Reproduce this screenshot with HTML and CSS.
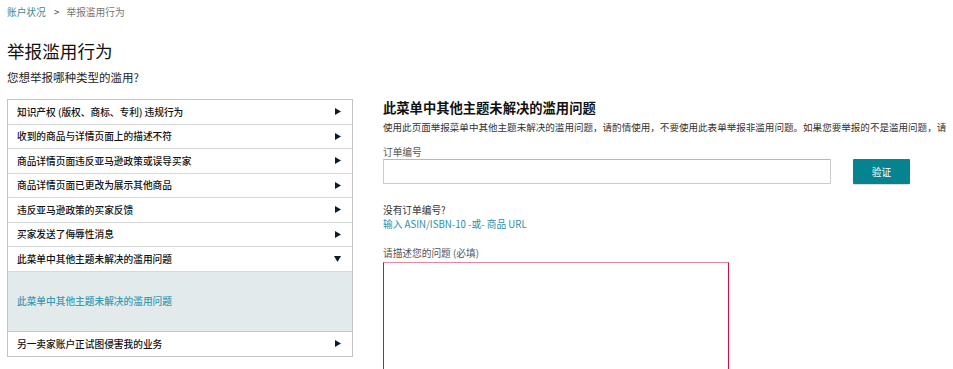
FILE: index.html
```html
<!DOCTYPE html>
<html lang="zh-CN">
<head>
  <meta charset="UTF-8">
  <meta name="viewport" content="width=device-width, initial-scale=1.0">
  <title>举报滥用行为</title>
  <link rel="stylesheet" href="styles.css">
</head>
<body>
  <div class="page">
    <nav class="breadcrumb">
      <a href="#">账户状况</a>
      <span class="sep">&gt;</span>
      <span class="current">举报滥用行为</span>
    </nav>

    <h1>举报滥用行为</h1>
    <p class="subtitle">您想举报哪种类型的滥用?</p>

    <div class="content">
      <div class="menu">
        <div class="menu-row">
          <span>知识产权 (版权、商标、专利) 违规行为</span>
          <svg class="arrow" width="6" height="7" viewBox="0 0 6 7"><polygon points="0,0 6,3.5 0,7" /></svg>
        </div>
        <div class="menu-row">
          <span>收到的商品与详情页面上的描述不符</span>
          <svg class="arrow" width="6" height="7" viewBox="0 0 6 7"><polygon points="0,0 6,3.5 0,7" /></svg>
        </div>
        <div class="menu-row">
          <span>商品详情页面违反亚马逊政策或误导买家</span>
          <svg class="arrow" width="6" height="7" viewBox="0 0 6 7"><polygon points="0,0 6,3.5 0,7" /></svg>
        </div>
        <div class="menu-row">
          <span>商品详情页面已更改为展示其他商品</span>
          <svg class="arrow" width="6" height="7" viewBox="0 0 6 7"><polygon points="0,0 6,3.5 0,7" /></svg>
        </div>
        <div class="menu-row">
          <span>违反亚马逊政策的买家反馈</span>
          <svg class="arrow" width="6" height="7" viewBox="0 0 6 7"><polygon points="0,0 6,3.5 0,7" /></svg>
        </div>
        <div class="menu-row">
          <span>买家发送了侮辱性消息</span>
          <svg class="arrow" width="6" height="7" viewBox="0 0 6 7"><polygon points="0,0 6,3.5 0,7" /></svg>
        </div>
        <div class="menu-row open">
          <span>此菜单中其他主题未解决的滥用问题</span>
          <svg class="arrow" width="7" height="6" viewBox="0 0 7 6"><polygon points="0,0 7,0 3.5,6" /></svg>
        </div>
        <div class="menu-panel">
          <a href="#">此菜单中其他主题未解决的滥用问题</a>
        </div>
        <div class="menu-row">
          <span>另一卖家账户正试图侵害我的业务</span>
          <svg class="arrow" width="6" height="7" viewBox="0 0 6 7"><polygon points="0,0 6,3.5 0,7" /></svg>
        </div>
      </div>

      <div class="form-area">
        <h2>此菜单中其他主题未解决的滥用问题</h2>
        <p class="desc">使用此页面举报菜单中其他主题未解决的滥用问题，请酌情使用，不要使用此表单举报非滥用问题。如果您要举报的不是滥用问题，请</p>

        <label class="field-label" for="orderId">订单编号</label>
        <div class="order-row">
          <input type="text" id="orderId" class="order-input">
          <button type="button" class="btn">验证</button>
        </div>

        <p class="no-order">没有订单编号?</p>
        <a href="#" class="alt-link">输入 ASIN/ISBN-10 -或- 商品 URL</a>

        <label class="field-label problem-label" for="problem">请描述您的问题 (必填)</label>
        <textarea id="problem" class="problem"></textarea>
      </div>
    </div>
  </div>
</body>
</html>
```

FILE: styles.css
```css
html, body {
  overflow: hidden;
}
body {
  font-family: "Noto Sans CJK SC", "Noto Sans", sans-serif;
  margin: 0;
  padding: 0;
  background-color: #fff;
  color: #111;
}
.page {
  padding: 0 7px;
}
.breadcrumb {
  padding-top: 5px;
  font-size: 9.7px;
  line-height: 14px;
  height: 14px;
  white-space: nowrap;
}
.breadcrumb a {
  color: #3b8796;
  text-decoration: none;
}
.breadcrumb .sep {
  color: #555;
  margin: 0 5px 0 6px;
}
.breadcrumb .current {
  color: #767676;
}
h1 {
  font-size: 17.6px;
  font-weight: normal;
  line-height: 24px;
  margin: 20px 0 0;
  color: #111;
}
.subtitle {
  font-size: 11.5px;
  line-height: 16px;
  margin: 6px 0 0;
  color: #222;
}
.content {
  display: flex;
  align-items: flex-start;
  margin-top: 14px;
}
.menu {
  width: 344px;
  flex: none;
  border: 1px solid #bfc5c5;
}
.menu-row {
  display: flex;
  justify-content: space-between;
  align-items: center;
  height: 23.5px;
  padding: 0 11px 0 9px;
  border-bottom: 1px solid #d5d9d9;
  font-size: 9.7px;
  font-weight: 500;
  color: #111;
  white-space: nowrap;
}
.menu-row:last-child {
  border-bottom: none;
}
.arrow {
  fill: #0f1c2b;
}
.menu-panel {
  display: flex;
  align-items: center;
  height: 59.5px;
  padding: 0 9px;
  background-color: #e3eaeb;
  border-bottom: 1px solid #c3cbcc;
}
.menu-panel a {
  color: #3a9ab4;
  font-size: 9.7px;
  font-weight: 500;
  text-decoration: none;
}
.form-area {
  margin-left: 30px;
  white-space: nowrap;
}
.form-area h2 {
  font-size: 13.3px;
  line-height: 18px;
  font-weight: bold;
  margin: 0 0 3px;
  color: #111;
}
.desc {
  font-size: 9.55px;
  line-height: 14px;
  margin: 0;
  color: #333;
}
.field-label {
  display: block;
  font-size: 9.7px;
  line-height: 14px;
  margin-top: 11px;
  color: #555;
}
.order-row {
  display: flex;
  align-items: center;
}
.order-input {
  width: 448px;
  height: 25px;
  box-sizing: border-box;
  border: 1px solid #c8cccc;
  border-top-color: #b4b8b8;
  border-radius: 1px;
  padding: 0 6px;
}
.btn {
  margin-left: 22px;
  width: 57px;
  height: 25px;
  background-color: #05838f;
  color: #fff;
  border: none;
  border-radius: 1px;
  box-shadow: 0 1px 1px rgba(0, 0, 0, 0.15);
  font-family: inherit;
  font-size: 9.7px;
  cursor: pointer;
}
.no-order {
  font-size: 9.7px;
  line-height: 14px;
  margin: 19px 0 0;
  color: #333;
}
.alt-link {
  display: block;
  font-size: 9.7px;
  line-height: 14px;
  color: #2b8ea7;
  text-decoration: none;
}
.problem-label {
  margin-top: 15px;
}
.problem {
  display: block;
  margin-top: 2px;
  width: 346px;
  height: 110px;
  box-sizing: border-box;
  border: 1px solid #cc1443;
  border-top-color: #e5899e;
  border-radius: 0;
  resize: none;
}
```
